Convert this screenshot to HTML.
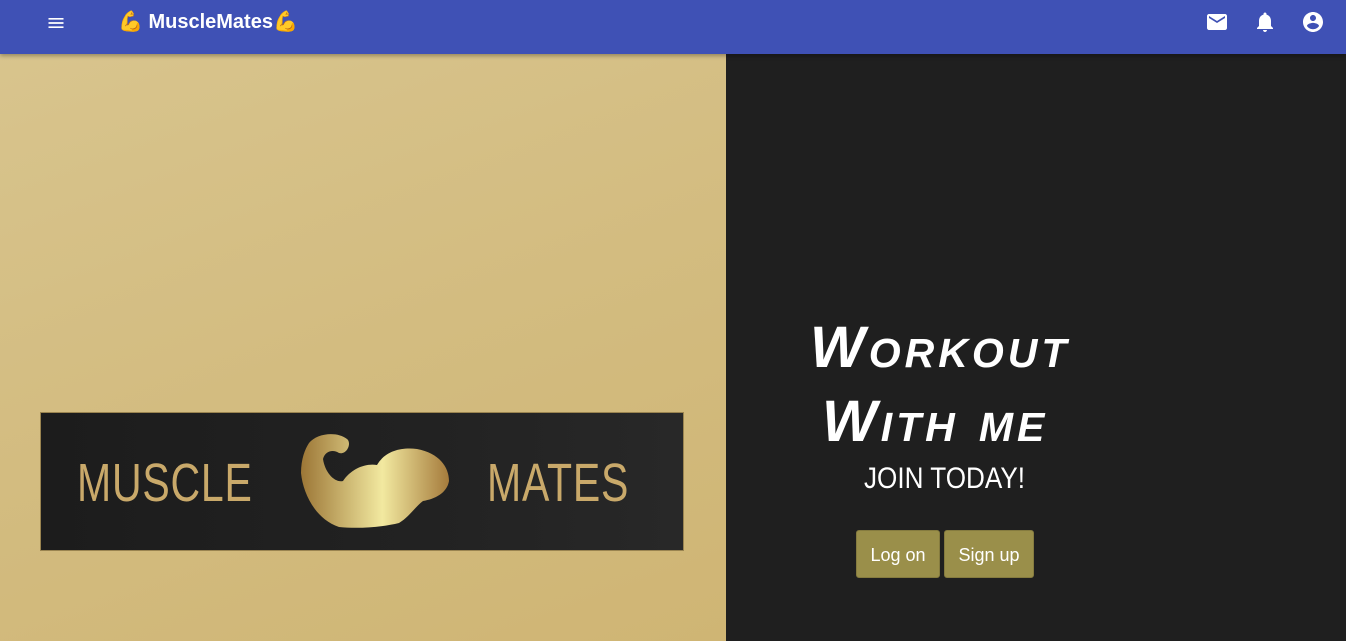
<!DOCTYPE html>
<html><head><meta charset="utf-8"><style>
*{margin:0;padding:0;box-sizing:border-box}
body{width:1346px;height:641px;overflow:hidden;font-family:"Liberation Sans",sans-serif;background:#1f1f1f;position:relative}
.bar{position:absolute;left:0;top:0;width:1346px;height:54px;background:#3f51b5;box-shadow:0 2px 4px rgba(0,0,0,.3);z-index:2}
.title{position:absolute;left:118px;top:10px;color:#fff;font-weight:bold;font-size:20px;line-height:24px}
.left{position:absolute;left:0;top:54px;width:726px;height:587px;background:linear-gradient(160deg,#d8c48d 0%,#d3bc80 50%,#cfb574 100%)}
.logo{position:absolute;left:40px;top:358px;width:644px;height:139px;background:linear-gradient(90deg,#1c1c1c,#222 60%,#282828);border:1px solid #9a8450}
.lt{position:absolute;top:40px;font-family:"Liberation Sans Narrow","Liberation Sans",sans-serif;font-size:54px;line-height:60px;color:#c9a96a;letter-spacing:1px;font-weight:normal;transform:scaleX(.76);transform-origin:left}
.h{position:absolute;color:#fff;font-style:italic;font-weight:bold;font-variant:small-caps;font-size:58px;line-height:60px;letter-spacing:4px}
.btn{position:absolute;top:530px;height:48px;background:#9a8f4a;border-radius:3px;color:#fff;font-size:18px;line-height:48px;text-align:center;border:1px solid #857b3f}
</style></head><body>
<div class="bar">
<svg style="position:absolute;left:46px;top:13px" width="20" height="20" viewBox="0 0 24 24"><path fill="#fff" d="M3 18h18v-2H3v2zm0-5h18v-2H3v2zm0-7v2h18V6H3z"/></svg>
<div class="title">💪 MuscleMates💪</div>
<svg style="position:absolute;left:1205px;top:10px" width="24" height="24" viewBox="0 0 24 24"><path fill="#fff" d="M20 4H4c-1.1 0-2 .9-2 2v12c0 1.1.9 2 2 2h16c1.1 0 2-.9 2-2V6c0-1.1-.9-2-2-2zm0 4l-8 5-8-5V6l8 5 8-5v2z"/></svg>
<svg style="position:absolute;left:1253px;top:10px" width="24" height="24" viewBox="0 0 24 24"><path fill="#fff" d="M12 22c1.1 0 2-.9 2-2h-4c0 1.1.9 2 2 2zm6-6v-5c0-3.07-1.64-5.640-4.5-6.32V4c0-.83-.67-1.5-1.5-1.5s-1.5.67-1.5 1.5v.68C7.63 5.36 6 7.920 6 11v5l-2 2v1h16v-1l-2-2z"/></svg>
<svg style="position:absolute;left:1301px;top:10px" width="24" height="24" viewBox="0 0 24 24"><path fill="#fff" d="M12 2C6.48 2 2 6.48 2 12s4.48 10 10 10 10-4.48 10-10S17.52 2 12 2zm0 3c1.66 0 3 1.34 3 3s-1.34 3-3 3-3-1.34-3-3 1.34-3 3-3zm0 14.2c-2.5 0-4.71-1.28-6-3.22.03-1.99 4-3.080 6-3.08 1.99 0 5.97 1.09 6 3.08-1.29 1.94-3.5 3.22-6 3.22z"/></svg>
</div>
<div class="left">
<div class="logo">
<div class="lt" style="left:36px">MUSCLE</div>
<div class="lt" style="left:446px">MATES</div>
<svg style="position:absolute;left:258px;top:20px" width="156" height="100" viewBox="0 0 156 100"><defs><linearGradient id="g" x1="0" x2="1"><stop offset="0" stop-color="#9c7636"/><stop offset=".55" stop-color="#f2e9a0"/><stop offset="1" stop-color="#a57b3c"/></linearGradient></defs><path fill="url(#g)" d="M10 10C18 0 38 -2 48 6 53 10 48 22 40 20 34 16 26 18 24 26 26 40 36 50 44 48 52 36 66 30 78 32 86 18 102 14 118 16 140 20 150 34 150 48 148 60 136 66 124 68 116 74 110 84 100 90 84 94 60 96 40 94 16 86 4 60 2 40 2 26 6 16 10 10Z"/></svg>
</div>
</div>
<div class="h" style="left:810px;top:318px">Workout</div>
<div class="h" style="left:822px;top:392px">With me</div>
<div style="position:absolute;left:864px;top:460px;color:#fff;font-size:30px;line-height:38px;transform:scaleX(.87);transform-origin:left">JOIN TODAY!</div>
<div class="btn" style="left:856px;width:84px">Log on</div>
<div class="btn" style="left:944px;width:90px">Sign up</div>
</body></html>
